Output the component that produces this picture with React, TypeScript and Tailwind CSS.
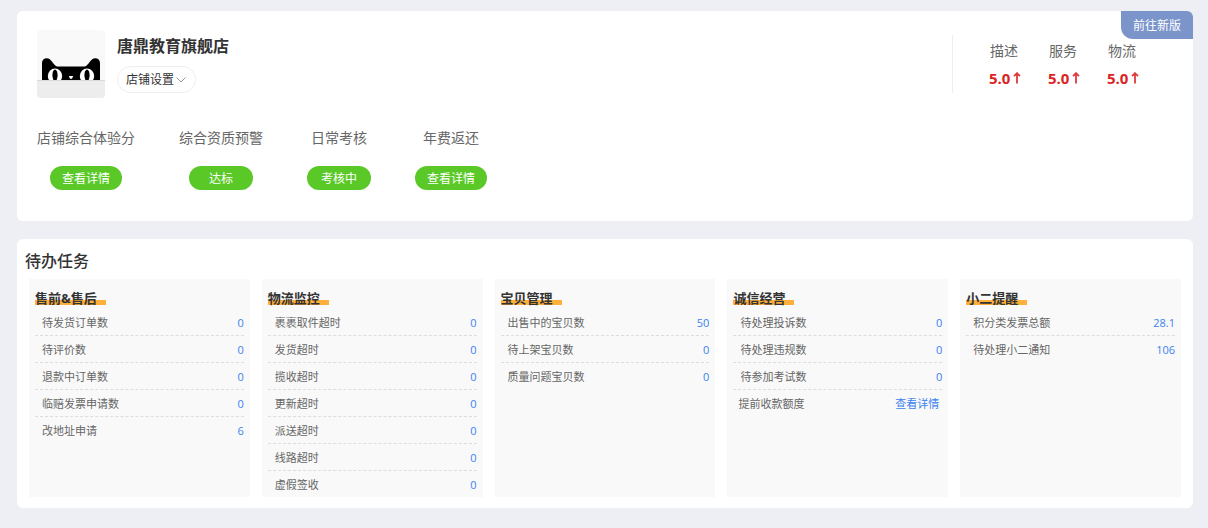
import clsx from 'clsx';

type Task = { label: string; value: string; action?: boolean };
type TaskGroup = { title: string; tasks: Task[] };

const scores = [
  { label: '描述', value: '5.0' },
  { label: '服务', value: '5.0' },
  { label: '物流', value: '5.0' },
];

const shopStatus = [
  { label: '店铺综合体验分', action: '查看详情' },
  { label: '综合资质预警', action: '达标' },
  { label: '日常考核', action: '考核中' },
  { label: '年费返还', action: '查看详情' },
];

const taskGroups: TaskGroup[] = [
  {
    title: '售前&售后',
    tasks: [
      { label: '待发货订单数', value: '0' },
      { label: '待评价数', value: '0' },
      { label: '退款中订单数', value: '0' },
      { label: '临赔发票申请数', value: '0' },
      { label: '改地址申请', value: '6' },
    ],
  },
  {
    title: '物流监控',
    tasks: [
      { label: '裹裹取件超时', value: '0' },
      { label: '发货超时', value: '0' },
      { label: '揽收超时', value: '0' },
      { label: '更新超时', value: '0' },
      { label: '派送超时', value: '0' },
      { label: '线路超时', value: '0' },
      { label: '虚假签收', value: '0' },
    ],
  },
  {
    title: '宝贝管理',
    tasks: [
      { label: '出售中的宝贝数', value: '50' },
      { label: '待上架宝贝数', value: '0' },
      { label: '质量问题宝贝数', value: '0' },
    ],
  },
  {
    title: '诚信经营',
    tasks: [
      { label: '待处理投诉数', value: '0' },
      { label: '待处理违规数', value: '0' },
      { label: '待参加考试数', value: '0' },
      { label: '提前收款额度', value: '查看详情', action: true },
    ],
  },
  {
    title: '小二提醒',
    tasks: [
      { label: '积分类发票总额', value: '28.1' },
      { label: '待处理小二通知', value: '106' },
    ],
  },
];

function CatLogo() {
  return (
    <svg
      className="size-[68px] shrink-0 rounded"
      viewBox="0 0 68 68"
      role="img"
      aria-label="店铺头像"
    >
      <rect width="68" height="68" fill="#f9f9f9" />
      <path
        d="M5 50.500V33c0-3 2-4.800 4.800-4.800 4.600 0 6.200 6.800 10.200 8.300h28c4-1.500 5.600-8.300 10.200-8.300 2.800 0 4.800 1.800 4.800 4.800v17.500z"
        fill="#000"
      />
      <ellipse cx="18" cy="46" rx="7.200" ry="7.500" fill="#fff" />
      <ellipse cx="50" cy="46" rx="7.200" ry="7.500" fill="#fff" />
      <ellipse cx="18" cy="45.200" rx="2.600" ry="5.600" fill="#000" />
      <ellipse cx="50" cy="45.200" rx="2.600" ry="5.600" fill="#000" />
      <path d="M31.800 46h4.400l-1.200 2.800h-2z" fill="#fff" />
      <rect y="50" width="68" height="18" fill="#ededed" />
      <path d="M0 50.500h68" stroke="#d9d9d9" />
    </svg>
  );
}

function UpArrow() {
  return (
    <svg className="h-3 w-2" viewBox="0 0 8 12" fill="none" aria-hidden="true">
      <path d="M4 11.500V1M1 4.200 4 1.200l3 3" stroke="#e03a3a" strokeWidth="1.800" />
    </svg>
  );
}

function TaskPanel({ title, tasks }: TaskGroup) {
  return (
    <section className="bg-[#f9f9f9] px-1.5 pt-3">
      <h3 className="mb-1 w-fit bg-[linear-gradient(to_top,#ffb03b_5px,transparent_5px)] pr-[9px] text-[13px] leading-[14px] font-bold text-[#333]">
        {title}
      </h3>
      <ul>
        {tasks.map((task) => (
          <li
            key={task.label}
            className="flex h-[27px] items-center justify-between border-b border-dashed border-[#ddd] pt-0.5 text-[11px] last:h-[26px] last:border-b-0"
          >
            <span
              className={clsx('text-[#666]', task.action ? 'pl-[5px]' : 'pl-[7px]')}
            >
              {task.label}
            </span>
            <a
              href="#"
              className={clsx('text-[#3b82f0]', task.action && 'pr-[3px]')}
            >
              {task.value}
            </a>
          </li>
        ))}
      </ul>
    </section>
  );
}

export default function App() {
  return (
    <main className="flex min-h-screen flex-col gap-[18px] bg-[#eeeff4] pt-[11px] pr-[15px] pb-5 pl-[17px] font-['Open_Sans','Noto_Sans_CJK_SC',sans-serif]">
      <section className="relative rounded-md bg-white px-5 pt-[19px] pb-[31px]">
        <button className="absolute top-0 right-0 h-7 rounded-tr-md rounded-bl-xl bg-[#7b95cb] px-3 pt-0.5 text-xs text-white">
          前往新版
        </button>
        <div className="flex items-start justify-between">
          <div className="flex gap-3">
            <CatLogo />
            <div>
              <h1 className="mt-1 text-base leading-6 font-bold text-[#333]">
                唐鼎教育旗舰店
              </h1>
              <button className="mt-2 flex h-[27px] items-center gap-px rounded-full border border-[#eee] px-2 text-xs text-[#333]">
                店铺设置
                <svg
                  className="h-3 w-3"
                  viewBox="0 0 12 12"
                  fill="none"
                  aria-hidden="true"
                >
                  <path d="m1.500 3.500 4.500 4.500 4.500-4.500" stroke="#999" />
                </svg>
              </button>
            </div>
          </div>
          <dl className="mt-[5px] mr-[34px] flex h-[58px] gap-[27px] border-l border-[#eee] pl-9">
            {scores.map((score) => (
              <div key={score.label} className="w-8">
                <dt className="mt-1 pl-px text-sm leading-6 text-[#666]">
                  {score.label}
                </dt>
                <dd className="mt-[3px] flex items-center justify-between text-[15px] leading-6 font-bold text-[#dc2323]">
                  {score.value}
                  <UpArrow />
                </dd>
              </div>
            ))}
          </dl>
        </div>
        <div className="mt-7 flex gap-11">
          {shopStatus.map((status) => (
            <div key={status.label} className="flex flex-col items-center gap-4">
              <span className="text-sm leading-6 text-[#666]">
                {status.label}
              </span>
              <button className="h-6 min-w-16 rounded-full bg-[#5ac928] px-3 pt-0.5 text-xs text-white">
                {status.action}
              </button>
            </div>
          ))}
        </div>
      </section>

      <section className="rounded-md bg-white pt-2.5 pb-[11px]">
        <h2 className="mb-1.5 pl-2 text-base leading-6 font-medium text-[#333]">
          待办任务
        </h2>
        <div className="grid grid-cols-5 gap-3 px-3">
          {taskGroups.map((group) => (
            <TaskPanel key={group.title} {...group} />
          ))}
        </div>
      </section>
    </main>
  );
}
